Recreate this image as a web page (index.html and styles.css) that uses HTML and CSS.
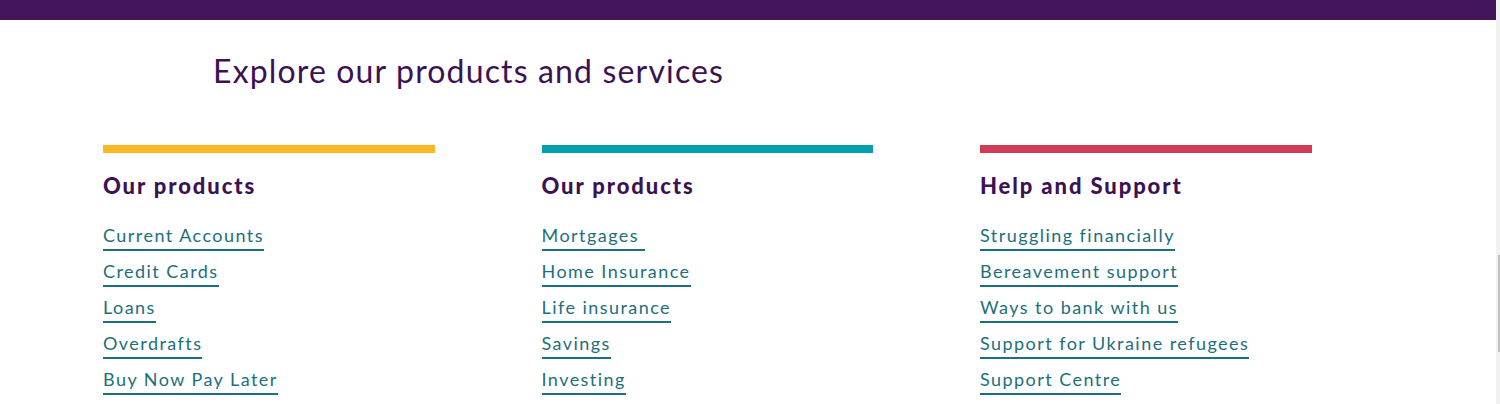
FILE: index.html
```html
<!DOCTYPE html>
<html lang="en">
<head>
<meta charset="utf-8">
<title>Explore our products and services</title>
<link rel="stylesheet" href="styles.css">
</head>
<body>
<div class="page">
  <main class="main">
    <div class="topbar"></div>
    <section class="explore">
      <h1 class="title">Explore our products and services</h1>
      <div class="columns">
        <div class="col">
          <div class="rule rule-yellow"></div>
          <h2 class="col-title">Our products</h2>
          <ul class="links">
            <li><a href="#">Current Accounts</a></li>
            <li><a href="#">Credit Cards</a></li>
            <li><a href="#">Loans</a></li>
            <li><a href="#">Overdrafts</a></li>
            <li><a href="#">Buy Now Pay Later</a></li>
          </ul>
        </div>
        <div class="col">
          <div class="rule rule-teal"></div>
          <h2 class="col-title">Our products</h2>
          <ul class="links">
            <li><a href="#">Mortgages&nbsp;</a></li>
            <li><a href="#">Home Insurance</a></li>
            <li><a href="#">Life insurance</a></li>
            <li><a href="#">Savings</a></li>
            <li><a href="#">Investing</a></li>
          </ul>
        </div>
        <div class="col">
          <div class="rule rule-red"></div>
          <h2 class="col-title">Help and Support</h2>
          <ul class="links">
            <li><a href="#">Struggling financially</a></li>
            <li><a href="#">Bereavement support</a></li>
            <li><a href="#">Ways to bank with us</a></li>
            <li><a href="#">Support for Ukraine refugees</a></li>
            <li><a href="#">Support Centre</a></li>
          </ul>
        </div>
      </div>
    </section>
  </main>
  <div class="scrollbar"><div class="thumb"></div></div>
</div>
</body>
</html>
```

FILE: styles.css
```css
* { box-sizing: border-box; }
html, body { margin: 0; padding: 0; background: #fff; }
body {
  font-family: "Lato", "Noto Sans", sans-serif;
  height: 404px;
  overflow: hidden;
}
.page {
  display: flex;
  height: 404px;
}
.main {
  flex: 1;
  min-width: 0;
}
.topbar {
  height: 20px;
  background: #43155b;
}
.explore {
  padding-left: 103px;
}
.title {
  margin: 32px 0 0 110px;
  font-size: 32px;
  line-height: 38px;
  font-weight: 400;
  color: #3b1253;
  letter-spacing: 1.15px;
}
.columns {
  display: flex;
  gap: 107px;
  margin-top: 55px;
}
.col {
  width: 331.5px;
}
.rule {
  height: 8px;
}
.rule-yellow { background: #fbb824; }
.rule-teal { background: #00a0a8; }
.rule-red { background: #d03b56; }
.col-title {
  margin: 20px 0 0;
  font-size: 22px;
  line-height: 26px;
  font-weight: 900;
  color: #3b1253;
  letter-spacing: 1.9px;
}
.links {
  list-style: none;
  margin: 25px 0 0;
  padding: 0;
  display: flex;
  flex-direction: column;
  gap: 8px;
}
.links li {
  height: 28px;
}
.links a {
  display: inline-block;
  font-size: 18px;
  line-height: 22px;
  color: #1d6f7b;
  text-decoration: none;
  padding-bottom: 3px;
  border-bottom: 2px solid #1d6f7b;
  letter-spacing: 1.45px;
}
.scrollbar {
  width: 4px;
  background: #f1f1f1;
  position: relative;
}
.thumb {
  position: absolute;
  top: 255px;
  left: 2px;
  width: 2px;
  height: 97px;
  background: #c1c1c1;
}
```
